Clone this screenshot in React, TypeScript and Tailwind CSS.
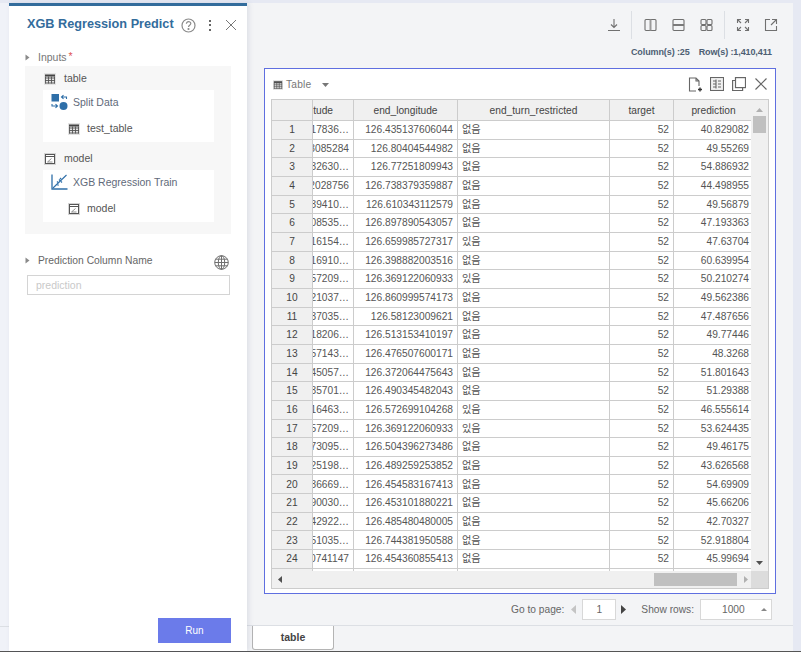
import React from 'react';

const SANS = "font-['Liberation_Sans','Noto_Sans_CJK_KR',sans-serif]";

const ROWS: [string, string, string, string][] = [
  ['417836…', '126.435137606044', '없음', '40.829082'],
  ['3085284', '126.80404544982', '없음', '49.55269'],
  ['832630…', '126.77251809943', '없음', '54.886932'],
  ['2028756', '126.738379359887', '없음', '44.498955'],
  ['839410…', '126.610343112579', '없음', '49.56879'],
  ['108535…', '126.897890543057', '없음', '47.193363'],
  ['116154…', '126.659985727317', '있음', '47.63704'],
  ['116910…', '126.398882003516', '없음', '60.639954'],
  ['557209…', '126.369122060933', '있음', '50.210274'],
  ['221037…', '126.860999574173', '없음', '49.562386'],
  ['837035…', '126.58123009621', '없음', '47.487656'],
  ['118206…', '126.513153410197', '없음', '49.77446'],
  ['557143…', '126.476507600171', '없음', '48.3268'],
  ['145057…', '126.372064475643', '없음', '51.801643'],
  ['835701…', '126.490345482043', '없음', '51.29388'],
  ['116463…', '126.572699104268', '있음', '46.555614'],
  ['557209…', '126.369122060933', '있음', '53.624435'],
  ['773095…', '126.504396273486', '없음', '49.46175'],
  ['225198…', '126.489259253852', '없음', '43.626568'],
  ['836669…', '126.454583167413', '없음', '54.69909'],
  ['990030…', '126.453101880221', '없음', '45.66206'],
  ['142922…', '126.485480480005', '없음', '42.70327'],
  ['551035…', '126.744381950588', '없음', '52.918804'],
  ['0741147', '126.454360855413', '없음', '45.99694'],
  ['', '', '없음', ''],
];

const Caret = () => (
  <svg width="5" height="7" viewBox="0 0 5 7" className="shrink-0">
    <path d="M0.5 0.5 L4.5 3.5 L0.5 6.5 Z" fill="#8a8a8a" />
  </svg>
);

const TableIcon = ({ size = 12 }: { size?: number }) => (
  <svg width={size} height={size} viewBox="0 0 12 12" className="shrink-0">
    <rect x="0" y="0" width="12" height="12" fill="#e4e4e4" />
    <rect x="1" y="1.5" width="10" height="2" fill="#444" />
    <path d="M1 5h10M1 7.5h10M1 10h10M1.5 3.5v7M4.5 3.5v7M7.5 3.5v7M10.5 3.5v7" stroke="#555" strokeWidth="0.9" fill="none" />
  </svg>
);

const ModelIcon = () => (
  <svg width="12" height="12" viewBox="0 0 12 12" className="shrink-0">
    <rect x="0" y="0" width="12" height="12" fill="#d4d4d4" />
    <rect x="1.5" y="1.5" width="9" height="9" fill="#fff" stroke="#555" strokeWidth="1" />
    <path d="M1.5 3.5h9" stroke="#555" strokeWidth="1" />
    <path d="M3.5 9h5M3.5 9l4-3.5" stroke="#777" strokeWidth="0.8" fill="none" />
  </svg>
);

const SplitIcon = () => (
  <svg width="17" height="16" viewBox="0 0 17 16" className="shrink-0">
    <rect x="0.5" y="0" width="7.5" height="7.5" fill="#2f6fa8" />
    <circle cx="12.5" cy="12" r="4" fill="#2f6fa8" />
    <path d="M15.5 5 V3 H11 M12.5 1.2 L10.5 3 L12.5 4.8" stroke="#2f6fa8" strokeWidth="1.1" fill="none" />
    <path d="M1 10 V12 H6 M4.5 10.2 L6.5 12 L4.5 13.8" stroke="#2f6fa8" strokeWidth="1.1" fill="none" />
  </svg>
);

const TrainIcon = () => (
  <svg width="17" height="16" viewBox="0 0 17 16" className="shrink-0">
    <path d="M1 0.5 V15 H16.5" stroke="#2f6fa8" strokeWidth="1.3" fill="none" />
    <path d="M2 14 L15.5 1" stroke="#2f6fa8" strokeWidth="1.1" fill="none" />
    <path d="M6 7.5l1 1M8 5.5l1.5 1.5M10 7.5l1 1M6.5 10.5l1 1M9 4l1.2 1.2" stroke="#2f6fa8" strokeWidth="1.2" fill="none" />
  </svg>
);

const Globe = () => (
  <svg width="15" height="15" viewBox="0 0 15 15" className="shrink-0" fill="none" stroke="#707070" strokeWidth="1">
    <circle cx="7.5" cy="7.5" r="6.8" />
    <ellipse cx="7.5" cy="7.5" rx="3.2" ry="6.8" />
    <path d="M7.5 0.7v13.6M0.7 7.5h13.6M1.6 4.2h11.8M1.6 10.8h11.8" />
  </svg>
);

const ToolIcon = ({ children, w = 14 }: { children: React.ReactNode; w?: number }) => (
  <svg width={w} height="14" viewBox={`0 0 ${w} 14`} fill="none" stroke="#707070" strokeWidth="1.1" className="shrink-0">
    {children}
  </svg>
);

const Cell = ({ width, align, children }: { width: string; align: string; children?: React.ReactNode }) => (
  <div className={`${width} ${align} h-full shrink-0 flex items-center overflow-hidden whitespace-nowrap border-r border-[#cccccc]`}>
    {children}
  </div>
);

const Header = () => (
  <div className="h-[21px] flex items-stretch shrink-0 bg-[#f0f0f0] border-b border-[#cccccc] text-[10.2px] text-[#444444]">
    <Cell width="w-[41px]" align="justify-center" />
    <Cell width="w-[41px]" align="justify-end pr-[20px] pt-[2px]">tude</Cell>
    <Cell width="w-[104px]" align="justify-center pt-[2px]">end_longitude</Cell>
    <Cell width="w-[152px]" align="justify-center pt-[2px]">end_turn_restricted</Cell>
    <Cell width="w-[64px]" align="justify-center pt-[2px]">target</Cell>
    <Cell width="w-[80px]" align="justify-center pt-[2px]">prediction</Cell>
  </div>
);

const Sidebar = () => (
  <aside className="w-[238px] shrink-0 bg-white border-t-[3px] border-[#336c9c] flex flex-col shadow-[2px_0_5px_rgba(60,70,120,0.12)] z-10">
    <div className="h-[35px] flex items-center pl-[18px] pt-[3px]">
      <span className="text-[12.7px] font-bold text-[#336c9c] whitespace-nowrap">XGB Regression Predict</span>
      <svg width="15" height="15" viewBox="0 0 15 15" className="ml-[7px]" fill="none" stroke="#8a8a8a" strokeWidth="1.2">
        <circle cx="7.5" cy="7.5" r="6.5" />
        <path d="M5.4 5.8c0-3 4.4-2.8 4.4-.2 0 1.7-2.3 1.7-2.3 3.4" />
        <circle cx="7.5" cy="11" r="0.5" />
      </svg>
      <div className="ml-[13px] flex flex-col gap-[2.5px]">
        <span className="w-[2px] h-[2px] bg-[#666666]" />
        <span className="w-[2px] h-[2px] bg-[#666666]" />
        <span className="w-[2px] h-[2px] bg-[#666666]" />
      </div>
      <svg width="12" height="12" viewBox="0 0 12 12" className="ml-[14px]" fill="none" stroke="#777777" strokeWidth="1">
        <path d="M1 1l10 10M11 1L1 11" />
      </svg>
    </div>

    <div className="flex items-center h-[12px] mt-[10px] pl-[16px] text-[10.5px] text-[#777777]">
      <Caret />
      <span className="ml-[8px] pt-[2px]">Inputs</span>
      <span className="ml-[2px] text-[#e05555]">*</span>
    </div>

    <div className="mx-[16px] mt-[3px] h-[168px] bg-[#f7f7f7] pl-[18px] pr-[17px] text-[10.5px] text-[#555555]">
      <div className="h-[24px] flex items-center pl-[1px] pt-[2px] gap-[8px]">
        <TableIcon />
        <span>table</span>
      </div>
      <div className="h-[52px] bg-white pl-[8px]">
        <div className="h-[26px] pt-[4px] flex items-start gap-[5px] text-[#5f6a7a]">
          <SplitIcon />
          <span className="pt-[1px]">Split Data</span>
        </div>
        <div className="h-[26px] flex items-center pl-[17px] gap-[7px]">
          <TableIcon />
          <span>test_table</span>
        </div>
      </div>
      <div className="h-[28px] flex items-center pl-[1px] pt-[5px] gap-[8px]">
        <ModelIcon />
        <span>model</span>
      </div>
      <div className="h-[52px] bg-white pl-[8px]">
        <div className="h-[26px] pt-[4px] flex items-start gap-[5px] text-[#5f6a7a]">
          <TrainIcon />
          <span className="pt-[1px]">XGB Regression Train</span>
        </div>
        <div className="h-[26px] flex items-center pl-[17px] gap-[7px]">
          <ModelIcon />
          <span>model</span>
        </div>
      </div>
    </div>

    <div className="flex items-center mt-[19px] h-[14px] pl-[16px] pr-[18px] text-[10.3px] text-[#666666]">
      <Caret />
      <span className="ml-[8px] pt-[2px]">Prediction Column Name</span>
      <span className="ml-auto mt-[5px]"><Globe /></span>
    </div>
    <div className="ml-[18px] mr-[17px] mt-[8px] h-[20px] border border-[#d4d4d4] pl-[8px] pt-[1px] flex items-center text-[10.5px] text-[#c9c9c9]">
      prediction
    </div>

    <div className="mt-auto mb-[8px] mr-[16px] self-end w-[73px] h-[25px] bg-[#6b7bea] text-white text-[10px] flex items-center justify-center">
      Run
    </div>
  </aside>
);

const Toolbar = () => (
  <div className="h-[44px] flex items-center justify-end pr-[15px] shrink-0">
    <ToolIcon>
      <path d="M7 1v8M4 6.5L7 9.5l3-3M1 12.5h12" />
    </ToolIcon>
    <div className="w-px h-[28px] bg-[#dcdfe4] ml-[10px] mr-[12px]" />
    <ToolIcon w={13}>
      <rect x="1" y="1.5" width="11" height="11" rx="1" />
      <path d="M6.5 1.5v11" strokeWidth="2" stroke="#9a9a9a" />
    </ToolIcon>
    <span className="w-[15px]" />
    <ToolIcon w={13}>
      <rect x="1" y="1.5" width="11" height="11" rx="1" />
      <path d="M1 7h11" strokeWidth="2" stroke="#7a7a7a" />
    </ToolIcon>
    <span className="w-[15px]" />
    <ToolIcon w={13}>
      <rect x="1" y="1.5" width="5" height="5" rx="1" />
      <rect x="7" y="1.5" width="5" height="5" rx="1" />
      <rect x="1" y="7.5" width="5" height="5" rx="1" />
      <rect x="7" y="7.5" width="5" height="5" rx="1" />
    </ToolIcon>
    <div className="w-px h-[28px] bg-[#dcdfe4] ml-[11px] mr-[11px]" />
    <ToolIcon>
      <path d="M1.5 5V1.5H5M9 1.5h3.5V5M1.5 9v3.5H5M9 12.5h3.5V9M1.5 1.5l3.5 3.5M12.5 1.5L9 5M1.5 12.5L5 9M12.5 12.5L9 9" />
    </ToolIcon>
    <span className="w-[14px]" />
    <ToolIcon>
      <path d="M6 1.5H1.5v11h11V8M8 1.5h4.5V6M12.5 1.5L7 7" />
    </ToolIcon>
  </div>
);

const DataTable = () => (
  <div className="h-[490px] border border-[#cccccc] flex flex-col bg-white">
    <div className="flex h-[471px]">
      <div className="w-[482px] overflow-hidden">
        <Header />
        {ROWS.map((row, i) => (
          <div key={i} className="h-[18.67px] flex items-stretch border-b border-[#cccccc] text-[10.2px] text-[#555555]">
            <Cell width="w-[41px] bg-[#f0f0f0] text-[#444444]" align="justify-center">{i < 24 ? i + 1 : ''}</Cell>
            <Cell width="w-[41px]" align="justify-end pr-[4px]">{row[0]}</Cell>
            <Cell width="w-[104px]" align="justify-end pr-[4px]">{row[1]}</Cell>
            <Cell width="w-[152px]" align="justify-start pl-[4px]">{row[2]}</Cell>
            <Cell width="w-[64px]" align="justify-end pr-[4px]">52</Cell>
            <Cell width="w-[80px]" align="justify-end pr-[4px]">{row[3]}</Cell>
          </div>
        ))}
      </div>
      <div className="w-[17px] bg-[#f0f0f0] flex flex-col items-center relative">
        <svg width="7" height="4" viewBox="0 0 7 4" className="mt-[8px]"><path d="M0 4L3.5 0 7 4Z" fill="#b0b0b0" /></svg>
        <div className="w-[13px] h-[17px] bg-[#c0c0c0] mt-[4px]" />
        <svg width="7" height="4" viewBox="0 0 7 4" className="mt-auto mb-[6px]"><path d="M0 0L3.5 4 7 0Z" fill="#505050" /></svg>
      </div>
    </div>
    <div className="h-[17px] flex items-center bg-[#f0f0f0]">
      <svg width="4" height="7" viewBox="0 0 4 7" className="ml-[6px]"><path d="M4 0L0 3.5 4 7Z" fill="#505050" /></svg>
      <div className="ml-[372px] w-[83px] h-[13px] bg-[#c0c0c0]" />
      <svg width="4" height="7" viewBox="0 0 4 7" className="ml-[7px]"><path d="M0 0L4 3.5 0 7Z" fill="#b0b0b0" /></svg>
      <div className="ml-auto w-[17px] h-full bg-[#dcdcdc]" />
    </div>
  </div>
);

const ResultBox = () => (
  <div className="h-[526px] mx-[17px] mt-[10px] border border-[#5f6fe0] bg-white px-[6px] shrink-0">
    <div className="h-[30px] flex items-center relative">
      <span className="ml-[2px] pt-[1px]"><TableIcon size={10} /></span>
      <span className="ml-[3px] pt-[2px] text-[10.2px] text-[#777777] tracking-[0.2px]">Table</span>
      <svg width="7" height="4" viewBox="0 0 7 4" className="ml-[11px] mt-[1px]"><path d="M0 0h7L3.5 4Z" fill="#777777" /></svg>
      <div className="ml-auto flex items-center gap-[8px] pr-[2px]">
        <svg width="14" height="15" viewBox="0 0 14 15" fill="none" stroke="#666666" strokeWidth="1.1">
          <path d="M8 14H1.5V1H8l3 3v5M8 1v3h3" />
          <path d="M12 10.5v4M10 12.5h4" stroke="#333333" strokeWidth="1.4" />
        </svg>
        <svg width="14" height="14" viewBox="0 0 14 14" fill="none" stroke="#666666" strokeWidth="1.1">
          <rect x="0.5" y="0.5" width="13" height="13" fill="#f0f0f0" />
          <path d="M3 4h3M8 4h3M3 7h3M8 7h3M3 10h3M8 10h3M6 2.5v9" />
        </svg>
        <svg width="14" height="14" viewBox="0 0 14 14" fill="none" stroke="#666666" strokeWidth="1.2">
          <rect x="3.5" y="0.6" width="10" height="10" />
          <path d="M3.5 3.5H0.6v10h10v-2.9" />
        </svg>
        <svg width="12" height="12" viewBox="0 0 12 12" fill="none" stroke="#666666" strokeWidth="1.2" className="ml-[1px]">
          <path d="M0.5 0.5l11 11M11.5 0.5l-11 11" />
        </svg>
      </div>
    </div>
    <DataTable />
  </div>
);

const Pager = () => (
  <div className="h-[21px] mt-[5px] pr-[21px] flex items-center justify-end text-[10.2px] text-[#666666] shrink-0">
    <span>Go to page:</span>
    <svg width="5" height="9" viewBox="0 0 5 9" className="ml-[7px]"><path d="M5 0L0 4.5 5 9Z" fill="#c4c4c4" /></svg>
    <div className="ml-[6px] w-[34px] h-[21px] bg-white border border-[#d8d8d8] flex items-center justify-center">1</div>
    <svg width="5" height="9" viewBox="0 0 5 9" className="ml-[5px]"><path d="M0 0L5 4.5 0 9Z" fill="#444444" /></svg>
    <span className="ml-[15px]">Show rows:</span>
    <div className="ml-[6px] w-[72px] h-[21px] bg-white border border-[#d8d8d8] flex items-center pl-[21px] relative">
      1000
      <svg width="6" height="3" viewBox="0 0 6 3" className="absolute right-[4px] top-[8px]"><path d="M0 3L3 0 6 3Z" fill="#888888" /></svg>
    </div>
  </div>
);

export default function App() {
  return (
    <div className={`${SANS} w-[801px] h-[652px] flex flex-col bg-[#e6e9f3] overflow-hidden`}>
      <div className="flex flex-1 min-h-0 pt-[3px]">
        <div className="w-[9px] shrink-0 flex flex-col bg-[#f0f2f8]">
          <div className="flex-1" />
          <div className="h-[25px] border-t border-[#dcdfe4]" />
        </div>
        <Sidebar />
        <main className="w-[546px] shrink-0 bg-[#f3f4f6] flex flex-col">
          <Toolbar />
          <div className="h-[11px] pr-[21px] flex items-center justify-end gap-[9px] text-[9px] font-bold text-[#4d5e73] whitespace-nowrap shrink-0 tracking-[-0.1px]">
            <span>Column(s) :25</span>
            <span>Row(s) :1,410,411</span>
          </div>
          <ResultBox />
          <Pager />
          <div className="flex-1 mt-[5px] border-t border-[#dcdfe4] pl-[5px]">
            <div className="w-[82px] h-[24px] bg-white border-x border-b border-[#b4b4b4] rounded-b-[3px] flex items-center justify-center text-[10.5px] font-bold text-[#444444]">
              table
            </div>
          </div>
        </main>
      </div>
      <div className="h-px bg-[#555555] shrink-0" />
    </div>
  );
}
